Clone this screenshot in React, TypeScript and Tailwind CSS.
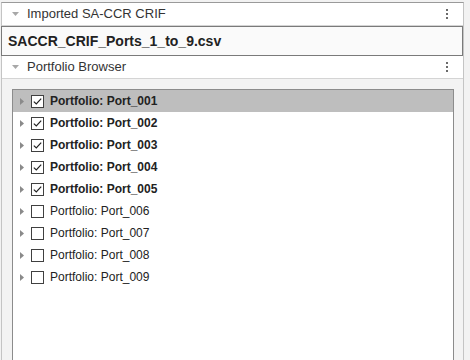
import React from "react";

const ports = [
  { name: "Port_001", checked: true, selected: true },
  { name: "Port_002", checked: true },
  { name: "Port_003", checked: true },
  { name: "Port_004", checked: true },
  { name: "Port_005", checked: true },
  { name: "Port_006", checked: false },
  { name: "Port_007", checked: false },
  { name: "Port_008", checked: false },
  { name: "Port_009", checked: false },
];

function Dots() {
  return (
    <div className="flex flex-col gap-[2px] mr-[15px]">
      <span className="w-[2px] h-[2px] bg-[#6b6b6b]" />
      <span className="w-[2px] h-[2px] bg-[#6b6b6b]" />
      <span className="w-[2px] h-[2px] bg-[#6b6b6b]" />
    </div>
  );
}

function SectionHeader({ title }: { title: string }) {
  return (
    <div className="h-[23px] bg-white border-b border-[#d4d4d4] flex items-center">
      <svg width="7" height="4" viewBox="0 0 7 4" className="ml-[10px] mr-[8px]">
        <polygon points="0,0 7,0 3.5,4" fill="#a8a8a8" />
      </svg>
      <span className="flex-1 text-[13px] text-[#333]">{title}</span>
      <Dots />
    </div>
  );
}

function CheckBox({ checked }: { checked: boolean }) {
  return (
    <div className="w-[13px] h-[13px] border border-[#404040] bg-white flex items-center justify-center">
      {checked && (
        <svg width="11" height="11" viewBox="0 0 11 11">
          <polyline points="1.8,5.6 4.3,8 9.2,2.6" fill="none" stroke="#222" strokeWidth="1.2" />
        </svg>
      )}
    </div>
  );
}

export default function App() {
  return (
    <div
      className="w-[470px] h-[360px] bg-[#f2f2f2] pt-[2px] pl-[1px] overflow-hidden"
      style={{ fontFamily: '"Liberation Sans", Arial, sans-serif' }}
    >
      <div className="w-[463px] h-[358px] flex flex-col border-t border-l border-r border-t-[#9a9a9a] border-l-[#c4c4c4] border-r-[#c4c4c4]">
        <SectionHeader title="Imported SA-CCR CRIF" />
        <div className="h-[30px] -ml-px bg-[#fafafa] border border-[#7a7a7a] flex items-center pl-[6px]">
          <span className="text-[14px] font-bold text-[#222]">SACCR_CRIF_Ports_1_to_9.csv</span>
        </div>
        <SectionHeader title="Portfolio Browser" />
        <div className="flex-1 bg-[#f3f3f3] pt-[10px] pl-[10px] pr-[9px] flex flex-col">
          <div className="flex-1 bg-white border border-[#8c8c8c] border-b-0 flex flex-col">
            {ports.map((p) => (
              <div
                key={p.name}
                className={`h-[22px] flex items-center ${p.selected ? "bg-[#bebebe]" : ""}`}
              >
                <svg width="4" height="7" viewBox="0 0 4 7" className="ml-[7px] mr-[7px]">
                  <polygon points="0,0 4,3.5 0,7" fill="#8a8a8a" />
                </svg>
                <CheckBox checked={p.checked} />
                <span
                  className={`ml-[6px] text-[12px] text-[#222] ${p.checked ? "font-bold" : ""}`}
                >
                  Portfolio: {p.name}
                </span>
              </div>
            ))}
          </div>
        </div>
      </div>
    </div>
  );
}
